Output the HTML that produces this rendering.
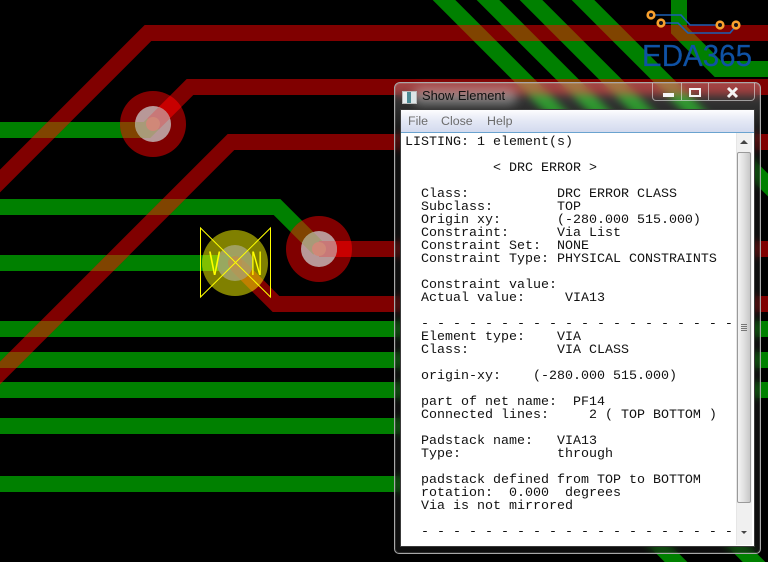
<!DOCTYPE html>
<html><head><meta charset="utf-8"><style>
html,body{margin:0;padding:0;background:#000}
body{width:768px;height:562px;overflow:hidden;position:relative;font-family:"Liberation Sans",sans-serif}
svg.b{position:absolute;left:0;top:0}
#win{position:absolute;left:394px;top:82px;width:365px;height:470px;border:1px solid #a8a8a8;border-radius:6px 6px 5px 5px;background:linear-gradient(180deg,rgba(255,255,255,.27),rgba(255,255,255,.18) 24px,rgba(25,25,25,.55) 60px,rgba(25,25,25,.55));backdrop-filter:blur(4px);box-shadow:inset 0 0 0 1px rgba(255,255,255,.12)}
#blob{position:absolute;left:18px;top:5px;width:104px;height:17px;background:rgba(225,225,225,.42);border-radius:9px;filter:blur(5px)}
#tt{position:absolute;left:27px;top:5px;font-size:12.9px;line-height:16px;color:#111}
#ic{position:absolute;left:7px;top:8px;width:13px;height:11px;background:linear-gradient(90deg,#e8eef0 0 4px,#4c8a94 4px 8px,#dde6e8 8px);border:1px solid #bbb}
#btns{position:absolute;left:257px;top:0;width:103px;height:18px;border:1px solid rgba(230,230,230,.6);border-top:0;border-radius:0 0 4px 4px;box-sizing:border-box}
#btns i{position:absolute;top:0;bottom:0;width:1px;background:rgba(230,230,230,.6)}
#client{position:absolute;left:5px;top:26px;width:355px;height:438px;background:#fff;border:1px solid #3a3a3a;box-sizing:border-box;overflow:hidden}
#menu{height:22px;background:linear-gradient(180deg,#fdfdfe,#e4e8f5 50%,#d3daee);border-bottom:1px solid #6aa3cf;position:relative;font-size:12.4px;color:#6c6c6c}
#menu span{position:absolute;top:4px;line-height:15px}
#txt{position:absolute;left:4px;top:26px;margin:0;font:13.33px/13px "Liberation Mono",monospace;color:#111;white-space:pre}
#sb{position:absolute;right:2px;top:23px;bottom:1px;width:15px;background:#f0f0f0;border-left:1px solid #e6e6e6}
#th{position:absolute;left:0;top:19px;width:14px;height:351px;box-sizing:border-box;border:1px solid #9a9a9a;border-radius:2px;background:linear-gradient(90deg,#f4f4f4,#e2e2e2 45%,#c8c8c8)}
</style></head><body>
<svg class="b" width="768" height="562" viewBox="0 0 768 562">
<defs>
<g id="gr" fill="none" stroke-width="16">
<path d="M-5 130H147L153 124"/>
<path d="M-5 207H277L319 249"/>
<path d="M-5 263H235"/>
<path d="M-5 329H768M-5 360H768M-5 390H768M-5 426H640M-5 484H640"/>
<path d="M434 -10L600 156M478 -10L640 152M521 -10L680 149M573 -10L780 197"/>
<path d="M679 -5V30L718 69H775"/>
<path d="M600 486L700 586M680 488L780 588"/>
</g>
<g id="rd" fill="none" stroke-width="16">
<path d="M-10 191L148 33H775"/>
<path d="M153 124L190 87H775"/>
<path d="M-10 383L231 142H775"/>
<path d="M319 249H775"/>
<path d="M235 263L276 304H775"/>
</g>
<mask id="mg" maskUnits="userSpaceOnUse" x="0" y="0" width="768" height="562"><use href="#gr" stroke="#fff"/></mask>
<clipPath id="c1"><circle cx="153" cy="124" r="33"/></clipPath>
<clipPath id="c2"><circle cx="319" cy="249" r="33"/></clipPath>
<clipPath id="c3"><circle cx="235" cy="263" r="33"/></clipPath>
<clipPath id="d1"><circle cx="153" cy="124" r="18"/></clipPath>
<clipPath id="d2"><circle cx="319" cy="249" r="18"/></clipPath>
<clipPath id="d3"><circle cx="235" cy="263" r="18"/></clipPath>
</defs>
<use href="#gr" stroke="#008000"/>
<use href="#rd" stroke="#800000"/>
<g mask="url(#mg)"><use href="#rd" stroke="#804400"/></g>
<circle cx="153" cy="124" r="33" fill="#800000"/>
<circle cx="319" cy="249" r="33" fill="#800000"/>
<g clip-path="url(#c1)"><path d="M-5 130H147" stroke="#804400" stroke-width="16" fill="none"/><path d="M153 124L190 87" stroke="#c80000" stroke-width="16" fill="none"/></g>
<g clip-path="url(#c2)"><path d="M277 207L319 249" stroke="#804400" stroke-width="16" fill="none"/><path d="M319 249H400" stroke="#c80000" stroke-width="16" fill="none"/></g>
<circle cx="153" cy="124" r="18" fill="#b89898"/>
<circle cx="319" cy="249" r="18" fill="#b89898"/>
<g clip-path="url(#d1)" fill="none" stroke-width="16"><path d="M120 130H147L153 124" stroke="#a89a78"/><path d="M153 124L190 87" stroke="#c87878"/></g>
<g clip-path="url(#d2)" fill="none" stroke-width="16"><path d="M277 207L319 249" stroke="#a89a78"/><path d="M319 249H400" stroke="#c87878"/></g>
<circle cx="153" cy="124" r="7" fill="#d08878"/>
<circle cx="319" cy="249" r="7" fill="#d08878"/>
<circle cx="235" cy="263" r="33" fill="#808000"/>
<g clip-path="url(#c3)"><path d="M190 263H235" stroke="#80c000" stroke-width="16" fill="none"/><path d="M235 263L276 304" stroke="#c08000" stroke-width="16" fill="none"/></g>
<circle cx="235" cy="263" r="18" fill="#a0a060"/>
<g clip-path="url(#d3)" fill="none" stroke-width="16"><path d="M190 263H235" stroke="#98a860"/><path d="M235 263L276 304" stroke="#b09858"/></g>
<circle cx="235" cy="263" r="7" fill="#b89450"/>
<path d="M200.500 228V297L270.500 228V297ZM200.500 228L270.500 297" stroke="#ffff00" stroke-width="1" fill="none"/>
<text transform="translate(209 275) scale(.5 1)" font-family="Liberation Sans" font-size="34" fill="#ffff00">V</text>
<text transform="translate(251 275) scale(.45 1)" font-family="Liberation Sans" font-size="34" fill="#ffff00">N</text>
<path d="M651 15H681L690 25H716M661 23H678L688 33H730L736 26" fill="none" stroke="#1a5fb4" stroke-width="1.600"/>
<g fill="#12121a" stroke="#f9a12e" stroke-width="2.600"><circle cx="651" cy="15" r="3.300"/><circle cx="661" cy="23" r="3.300"/><circle cx="720" cy="25" r="3.300"/><circle cx="736" cy="25" r="3.300"/></g>
<text x="642" y="66" font-family="Liberation Sans" font-size="31" fill="#0f52a5" stroke="#0f52a5" stroke-width=".2" textLength="110" lengthAdjust="spacingAndGlyphs">EDA365</text>
</svg>
<div id="win">
<div id="blob"></div><div id="ic"></div><div id="tt">Show Element</div>
<div id="btns"><i style="left:28px"></i><i style="left:55px"></i>
<svg width="103" height="18" style="position:absolute;left:0;top:0"><rect x="10" y="10" width="11" height="4" fill="#f4f4f4"/><rect x="37" y="6" width="10" height="7" fill="none" stroke="#f4f4f4" stroke-width="2"/><path d="M75 5L84 14M84 5L75 14" stroke="#f4f4f4" stroke-width="3"/></svg></div>
<div id="client">
<div id="menu"><span style="left:7px">File</span><span style="left:40px">Close</span><span style="left:86px">Help</span></div>
<pre id="txt">LISTING: 1 element(s)

           &lt; DRC ERROR &gt;

  Class:           DRC ERROR CLASS
  Subclass:        TOP
  Origin xy:       (-280.000 515.000)
  Constraint:      Via List
  Constraint Set:  NONE
  Constraint Type: PHYSICAL CONSTRAINTS

  Constraint value:
  Actual value:     VIA13

  - - - - - - - - - - - - - - - - - - - -
  Element type:    VIA
  Class:           VIA CLASS

  origin-xy:    (-280.000 515.000)

  part of net name:  PF14
  Connected lines:     2 ( TOP BOTTOM )

  Padstack name:   VIA13
  Type:            through

  padstack defined from TOP to BOTTOM
  rotation:  0.000  degrees
  Via is not mirrored

  - - - - - - - - - - - - - - - - - - - -</pre>
<div id="sb"><svg width="14" height="414" style="position:absolute;left:0;top:0"><path d="M3 11L7 7L11 11Z" fill="#444"/><path d="M4 398H10L7 401Z" fill="#444"/></svg>
<div id="th"><svg width="12" height="349"><path d="M3 171.500H9M3 173.500H9M3 175.500H9M3 177.500H9" stroke="#777"/></svg></div></div>
</div></div>
</body></html>
